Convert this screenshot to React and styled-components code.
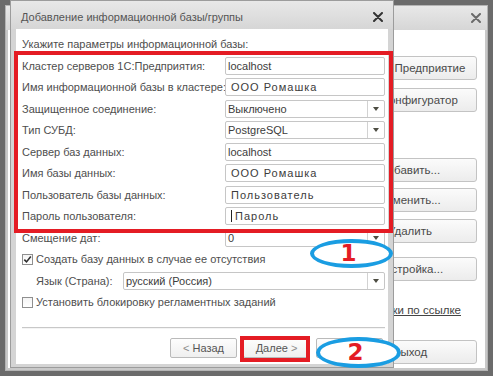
import React from "react";
import styled, { createGlobalStyle } from "styled-components";

const Global = createGlobalStyle`
  html, body { margin: 0; padding: 0; background: #6c6c6c; }
  body { font-family: "Liberation Sans", Arial, sans-serif; }
`;

const Screen = styled.div`
  position: relative;
  width: 493px;
  height: 376px;
  overflow: hidden;
  background: #6b6b6b;
  font-family: "Liberation Sans", Arial, sans-serif;
`;

const Window = styled.div`
  position: absolute;
  left: ${(p) => p.$left}px;
  top: ${(p) => p.$top}px;
  width: ${(p) => p.$width}px;
  height: ${(p) => p.$height}px;
  box-sizing: border-box;
  display: flex;
  flex-direction: column;
  border: 1px solid ${(p) => (p.$active ? "#9c9c9c" : "#b4b4b4")};
  background: ${(p) => (p.$active ? "#d4d4d4" : "#c9c9c9")};
  padding: 0 ${(p) => p.$sideFrame}px ${(p) => p.$bottomFrame}px
    ${(p) => p.$sideFrame}px;
`;

const TitleBar = styled.div`
  height: ${(p) => p.$height}px;
  flex: none;
  display: flex;
  align-items: center;
  justify-content: ${(p) => p.$justify || "space-between"};
  padding: ${(p) => p.$pad};
  box-sizing: border-box;
  background: linear-gradient(#e8e8e8, #d6d6d6);
  margin: 0 -${(p) => p.$frame}px;
  font-size: 11px;
  color: #555;
  white-space: nowrap;
`;

const CloseIcon = ({ color }) => (
  <svg width="10" height="10" viewBox="0 0 10 10">
    <path d="M1 1 L9 9 M9 1 L1 9" stroke={color} strokeWidth="2" strokeLinecap="round" />
  </svg>
);

const Body = styled.div`
  flex: 1;
  min-height: 0;
  background: #fff;
  box-sizing: border-box;
  display: flex;
  flex-direction: ${(p) => p.$dir || "column"};
  justify-content: ${(p) => p.$justify || "flex-start"};
  padding: ${(p) => p.$pad};
`;

/* ---------- back window (launcher) ---------- */

const ButtonColumn = styled.div`
  width: 134px;
  display: flex;
  flex-direction: column;
`;

const LaunchButton = styled.div`
  height: 24px;
  margin-top: ${(p) => p.$mt}px;
  padding-left: ${(p) => p.$indent || 0}px;
  box-sizing: border-box;
  border: 1px solid #c3c3c3;
  border-radius: 3px;
  background: linear-gradient(#fbfbfb, #ececec);
  display: flex;
  align-items: center;
  justify-content: center;
  font-size: 11.5px;
  color: #4a4a4a;
  white-space: nowrap;
`;

const LaunchLink = styled.div`
  margin-top: 22px;
  margin-right: 16px;
  align-self: flex-end;
  line-height: 14px;
  font-size: 11.5px;
  color: #444;
  text-decoration: underline;
  white-space: nowrap;
`;

/* ---------- front dialog ---------- */

const Header = styled.div`
  font-size: 11px;
  line-height: 14px;
  color: #4e4e4e;
  white-space: nowrap;
`;

const Form = styled.div`
  margin-top: 5.5px;
  display: flex;
  flex-direction: column;
  gap: 3.5px;
`;

const FieldRow = styled.div`
  height: 18px;
  display: grid;
  grid-template-columns: 203px 160px;
  align-items: center;
`;

const LangRow = styled.div`
  height: 18px;
  display: grid;
  grid-template-columns: 87px 262px;
  align-items: center;
  padding-left: 14px;
`;

const CheckRow = styled.div`
  height: 18px;
  display: flex;
  align-items: center;
  gap: 3px;
`;

const Label = styled.span`
  font-size: 11px;
  color: #4e4e4e;
  white-space: nowrap;
`;

const Box = styled.div`
  height: 18px;
  box-sizing: border-box;
  border: 1px solid #c6c6c6;
  border-radius: 2px;
  background: #fff;
  display: flex;
  align-items: center;
  overflow: hidden;
`;

const BoxText = styled.span`
  flex: 1;
  padding-left: ${(p) => (p.$spaced ? 5 : 2)}px;
  letter-spacing: ${(p) => (p.$spaced ? "1px" : "0")};
  font-size: 11px;
  color: #3c3c3c;
  white-space: nowrap;
`;

const Caret = styled.span`
  display: inline-block;
  width: 1px;
  height: 12px;
  margin-right: 3px;
  vertical-align: -2px;
  background: #222;
`;

const ArrowCell = styled.div`
  width: 16px;
  align-self: stretch;
  border-left: 1px solid #d2d2d2;
  display: flex;
  align-items: center;
  justify-content: center;
  &::after {
    content: "";
    border-left: 3.5px solid transparent;
    border-right: 3.5px solid transparent;
    border-top: 4px solid #4d4d42;
  }
`;

const CheckBox = styled.div`
  width: 11px;
  height: 11px;
  box-sizing: border-box;
  border: 1px solid #8f8f8f;
  background: linear-gradient(#f4f4f4, #fff);
  display: flex;
  align-items: center;
  justify-content: center;
`;

const Separator = styled.div`
  margin-top: 16px;
  height: 1px;
  background: #c8c8c8;
  box-shadow: 0 1px 0 #f4f4f4;
`;

const ButtonBar = styled.div`
  margin-top: 10px;
  padding-right: 2px;
  display: flex;
  justify-content: flex-end;
  gap: 6px;
`;

const DialogButton = styled.div`
  width: 67px;
  height: 20px;
  box-sizing: border-box;
  border: 1px solid #bababa;
  border-radius: 2px;
  background: linear-gradient(#fdfdfd, #efefef);
  display: flex;
  align-items: center;
  justify-content: center;
  gap: 3px;
  font-size: 11px;
  color: #555;
`;

const Chevron = styled.span`
  color: #8a8a8a;
  font-size: 11px;
`;

/* ---------- annotations ---------- */

const RedFrame = styled.div`
  position: absolute;
  left: ${(p) => p.$left}px;
  top: ${(p) => p.$top}px;
  width: ${(p) => p.$width}px;
  height: ${(p) => p.$height}px;
  box-sizing: border-box;
  border: 4px solid #e41c24;
  pointer-events: none;
`;

const Ellipse = styled.div`
  position: absolute;
  left: ${(p) => p.$left}px;
  top: ${(p) => p.$top}px;
  width: ${(p) => p.$width}px;
  height: ${(p) => p.$height}px;
  box-sizing: border-box;
  border: 4px solid #1a9de2;
  border-radius: 50%;
  background: #fff;
  display: flex;
  align-items: center;
  justify-content: center;
  padding-right: 6px;
  font-family: "DejaVu Sans", sans-serif;
  font-weight: bold;
  font-size: 23px;
  line-height: 1;
  color: #e41c24;
`;

const Field = ({ label, value, spaced, select, caret }) => (
  <FieldRow>
    <Label>{label}</Label>
    <Box>
      <BoxText $spaced={spaced}>
        {caret && <Caret />}
        {value}
      </BoxText>
      {select && <ArrowCell />}
    </Box>
  </FieldRow>
);

const Check = () => (
  <svg width="9" height="9" viewBox="0 0 9 9">
    <path d="M1.3 4.6 L3.5 6.9 L7.8 1.6" stroke="#2e2e2e" strokeWidth="1.6" fill="none" />
  </svg>
);

export default function App() {
  return (
    <>
      <Global />
      <Screen>
        <Window $left={5} $top={5} $width={483} $height={366} $sideFrame={2} $bottomFrame={2}>
          <TitleBar $height={24} $frame={2} $pad="0 6px 0 10px" $justify="flex-end">
            <CloseIcon color="#6a6a6a" />
          </TitleBar>
          <Body $dir="row" $justify="flex-end" $pad="0 8px 0 0">
            <ButtonColumn>
              <LaunchButton $mt={26} $indent={22}>1С:Предприятие</LaunchButton>
              <LaunchButton $mt={8} $indent={20}>Конфигуратор</LaunchButton>
              <LaunchButton $mt={46}>Добавить...</LaunchButton>
              <LaunchButton $mt={6}>Изменить...</LaunchButton>
              <LaunchButton $mt={7}>Удалить</LaunchButton>
              <LaunchButton $mt={14}>Настройка...</LaunchButton>
              <LaunchLink>Настройки по ссылке</LaunchLink>
              <LaunchButton $mt={23}>Выход</LaunchButton>
            </ButtonColumn>
          </Body>
        </Window>

        <Window $active $left={10} $top={0} $width={384} $height={368} $sideFrame={5} $bottomFrame={3}>
          <TitleBar $height={28} $frame={5} $pad="3px 10px 0 10px">
            <span>Добавление информационной базы/группы</span>
            <CloseIcon color="#333" />
          </TitleBar>
          <Body $pad="8px 3px 0 6px">
            <Header>Укажите параметры информационной базы:</Header>
            <Form>
              <Field label="Кластер серверов 1С:Предприятия:" value="localhost" />
              <Field label="Имя информационной базы в кластере:" value="ООО Ромашка" spaced />
              <Field label="Защищенное соединение:" value="Выключено" select />
              <Field label="Тип СУБД:" value="PostgreSQL" select />
              <Field label="Сервер баз данных:" value="localhost" />
              <Field label="Имя базы данных:" value="ООО Ромашка" spaced />
              <Field label="Пользователь базы данных:" value="Пользователь" spaced />
              <Field label="Пароль пользователя:" value="Пароль" spaced caret />
              <Field label="Смещение дат:" value="0" select />
              <CheckRow>
                <CheckBox>
                  <Check />
                </CheckBox>
                <Label>Создать базу данных в случае ее отсутствия</Label>
              </CheckRow>
              <LangRow>
                <Label>Язык (Страна):</Label>
                <Box>
                  <BoxText>русский (Россия)</BoxText>
                  <ArrowCell />
                </Box>
              </LangRow>
              <CheckRow>
                <CheckBox />
                <Label>Установить блокировку регламентных заданий</Label>
              </CheckRow>
            </Form>
            <Separator />
            <ButtonBar>
              <DialogButton>
                <Chevron>&lt;</Chevron>Назад
              </DialogButton>
              <DialogButton>
                Далее<Chevron>&gt;</Chevron>
              </DialogButton>
              <DialogButton />
            </ButtonBar>
          </Body>
        </Window>

        <RedFrame $left={14} $top={51} $width={379} $height={182} />
        <RedFrame $left={240} $top={336} $width={70} $height={26} />
        <Ellipse $left={310} $top={239} $width={83} $height={29}>1</Ellipse>
        <Ellipse $left={316} $top={337} $width={85} $height={31}>2</Ellipse>
      </Screen>
    </>
  );
}
